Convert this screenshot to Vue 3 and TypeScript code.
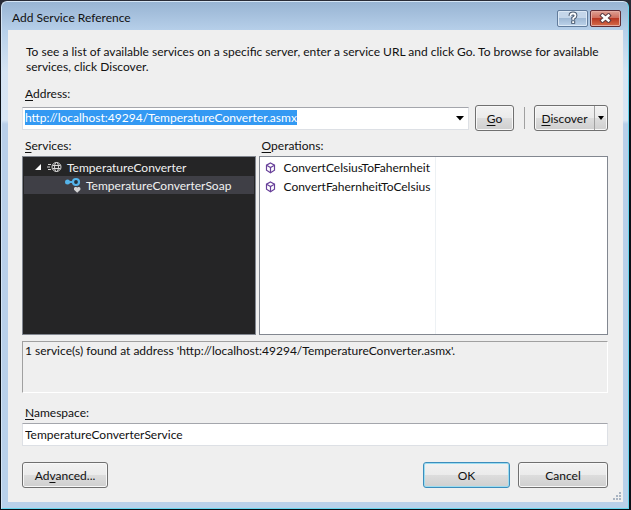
<script setup lang="ts">
import { onMounted, ref } from 'vue'

const address = ref('http://localhost:49294/TemperatureConverter.asmx')
const namespaceName = ref('TemperatureConverterService')
const expanded = ref(true)
const operations: string[] = ['ConvertCelsiusToFahernheit', 'ConvertFahernheitToCelsius']
const addressBox = ref<HTMLInputElement | null>(null)

onMounted(() => {
  addressBox.value?.focus()
  addressBox.value?.select()
})
</script>

<template>
  <div class="desktop">
    <section class="window" role="dialog" aria-labelledby="dialog-title">
      <header class="titlebar">
        <h1 id="dialog-title">Add Service Reference</h1>
        <button class="caption help" type="button" aria-label="Help">
          <svg width="12" height="14" viewBox="0 0 12 14">
            <path d="M3.5 5V4.2Q3.5 2.500 6 2.500T8.500 4.700Q8.500 6 6.200 7.200V8.800" fill="none" stroke="#46566b" stroke-width="3.800" />
            <path d="M4.200 9.400h4v3.400h-4z" fill="#46566b" />
            <path d="M3.500 5V4.200Q3.500 2.500 6 2.500T8.500 4.700Q8.500 6 6.200 7.200V8.800" fill="none" stroke="#fff" stroke-width="1.800" />
            <path d="M5.200 10.200h2v1.800h-2z" fill="#fff" />
          </svg>
        </button>
        <button class="caption close" type="button" aria-label="Close">
          <svg width="13" height="10" viewBox="0 0 13 10">
            <path d="M3.500 2.500l6 5M9.500 2.500l-6 5" stroke="#5b3a42" stroke-width="4.400" stroke-linecap="square" />
            <path d="M3.500 2.500l6 5M9.500 2.500l-6 5" stroke="#fff" stroke-width="2.400" stroke-linecap="square" />
          </svg>
        </button>
      </header>

      <form class="client" @submit.prevent>
        <p class="intro">To see a list of available services on a specific server, enter a service URL and click Go. To browse for available services, click Discover.</p>

        <label class="caption-text" for="address"><u>A</u>ddress:</label>
        <div class="address-row">
          <div class="combo">
            <input id="address" ref="addressBox" v-model="address" type="text" spellcheck="false" autocomplete="off" />
            <button class="arrow" type="button" aria-label="Show recent addresses">
              <svg width="8" height="5" viewBox="0 0 8 5"><path d="M0 0h8L4 4.500z" /></svg>
            </button>
          </div>
          <button class="push go" type="button"><u>G</u>o</button>
          <span class="divider"></span>
          <div class="split">
            <button class="split-main" type="button"><u>D</u>iscover</button>
            <button class="split-arrow" type="button" aria-label="Discover options">
              <svg width="6" height="4" viewBox="0 0 6 4"><path d="M0 0h6L3 4z" /></svg>
            </button>
          </div>
        </div>

        <div class="panes">
          <div class="pane">
            <span id="services-label" class="caption-text"><u>S</u>ervices:</span>
            <ul class="tree" role="tree" aria-labelledby="services-label">
              <li class="node root" role="treeitem" :aria-expanded="expanded" @click="expanded = !expanded">
                <svg width="8" height="8" viewBox="0 0 8 8"><path d="M7 1v6H1z" fill="#fff" /></svg>
                <svg class="globe" width="15" height="12" viewBox="0 0 15 12" fill="none" stroke="#d6d6d6">
                  <path d="M1 3.500h3M0 6h3M1 8.500h3" />
                  <circle cx="9.500" cy="6" r="4.500" />
                  <ellipse cx="9.500" cy="6" rx="2" ry="4.500" />
                  <path d="M5.500 4.500h8M5.500 7.500h8" />
                </svg>
                <span>TemperatureConverter</span>
              </li>
              <li v-if="expanded" class="node child" role="treeitem" aria-selected="true">
                <svg width="17" height="16" viewBox="0 0 17 16">
                  <path d="M3 5h6" stroke="#55b4ea" stroke-width="2" />
                  <circle cx="2.500" cy="5" r="2.500" fill="#55b4ea" />
                  <circle cx="11" cy="5" r="3" fill="#25313a" stroke="#55b4ea" stroke-width="2.200" />
                  <path d="M10 10h1.500l.7.7.7-.7h1.500l1 1v1.800l-3.200 3-3.200-3V11z" fill="#d4d4d4" />
                </svg>
                <span>TemperatureConverterSoap</span>
              </li>
            </ul>
          </div>
          <div class="pane">
            <span id="operations-label" class="caption-text"><u>O</u>perations:</span>
            <ul class="list" aria-labelledby="operations-label">
              <li v-for="name in operations" :key="name">
                <svg width="11" height="12" viewBox="0 0 11 12" fill="none" stroke="#68409a" stroke-width="1.200">
                  <path d="M5.500 1l4 2.200v5L5.500 10.700l-4-2.500v-5z" />
                  <path d="M2 3.600l3.500 2 3.500-2M5.500 5.600v4.800" />
                </svg>
                <span>{{ name }}</span>
              </li>
            </ul>
          </div>
        </div>

        <output class="status">1 service(s) found at address '{{ address }}'.</output>

        <label class="caption-text" for="namespace"><u>N</u>amespace:</label>
        <input id="namespace" v-model="namespaceName" class="field" type="text" spellcheck="false" autocomplete="off" />

        <footer class="actions">
          <button class="push advanced" type="button">Ad<u>v</u>anced...</button>
          <button class="push ok" type="submit">OK</button>
          <button class="push cancel" type="button">Cancel</button>
        </footer>
        <svg class="grip" width="9" height="9" viewBox="0 0 9 9" fill="#a9b4c2">
          <path d="M6 0h2v2H6zM3 3h2v2H3zM6 3h2v2H6zM0 6h2v2H0zM3 6h2v2H3zM6 6h2v2H6z" />
        </svg>
      </form>
    </section>
  </div>
</template>

<style>
body {
  margin: 0;
  background: #101c26;
}
</style>

<style scoped>
* {
  box-sizing: border-box;
}

.desktop {
  min-height: 100vh;
  display: flex;
  padding: 1px 2px 2px 1px;
  background: linear-gradient(#292b36, #0a1017 20%, #0a1017);
  font: 12px/15px Lato, "Open Sans", sans-serif;
  color: #111;
}

.window {
  flex: 1;
  display: flex;
  flex-direction: column;
  padding: 0 5px 6px 6px;
  border: 1px solid #d5e5f5;
  border-right-color: #66d6ee;
  border-bottom-color: #66d6ee;
  border-radius: 6px 6px 0 0;
  background: linear-gradient(#98b4d3, #b6cfe9 28px, #d6e4f3 70px, #d9e6f4 118px, #b9cfe9 122px, #b9d1ea);
}

.titlebar {
  display: flex;
  align-items: center;
  height: 28px;
  padding: 4px 2px 0 4px;
}

h1 {
  flex: 1;
  margin: 0;
  font-size: 12px;
  line-height: 16px;
  font-weight: 400;
}

button,
input {
  font: inherit;
  color: inherit;
}

button {
  padding: 0;
}

.caption {
  display: flex;
  align-items: center;
  justify-content: center;
  width: 31px;
  height: 17px;
  margin-left: 2px;
  border: 1px solid #627c9c;
  border-radius: 2px;
  box-shadow: inset 0 0 0 1px #dce9f6;
}

.help {
  background: linear-gradient(#c4d6ea 50%, #9fb9d5 50%, #bdd3ea);
}

.close {
  border-color: #602c35;
  background: linear-gradient(#dda195, #cf6b5a 48%, #b83824 50%, #d66c4a);
  box-shadow: inset 0 0 0 1px #e5aaa0;
}

.client {
  position: relative;
  flex: 1;
  display: flex;
  flex-direction: column;
  padding: 14px 15px 14px 14px;
  background: #efefef;
}

.intro {
  margin: 0 4px 12px;
}

.caption-text {
  display: block;
  padding-left: 3px;
  line-height: 15px;
}

u {
  text-underline-offset: 2px;
}

.address-row {
  display: flex;
  align-items: center;
  height: 26px;
  margin: 4px 0 7px;
}

.combo {
  flex: 1;
  display: flex;
  height: 23px;
  border: 1px solid #dde0e5;
  border-top-color: #a4a6ac;
  background: #fff;
}

.combo input {
  flex: 1;
  min-width: 0;
  height: 17px;
  margin: 1px 0 0 2px;
  padding: 0;
  border: 0;
  outline: 0;
  background: transparent;
}

.combo input::selection {
  background: #3399f3;
  color: #fff;
}

.arrow {
  width: 17px;
  border: 0;
  background: transparent;
}

.arrow svg,
.split-arrow svg {
  display: block;
  margin: 0 auto;
}

.push,
.split {
  border: 1px solid #707070;
  border-radius: 3px;
  background: linear-gradient(#f2f2f2, #ebebeb 49%, #dddddd 50%, #cfcfcf);
  box-shadow: inset 0 0 0 1px #f8f8f8;
}

.push {
  height: 26px;
}

.go {
  width: 39px;
  margin-left: 6px;
}

.divider {
  width: 1px;
  height: 22px;
  margin: 0 9px 0 10px;
  background: #a0a0a0;
}

.split {
  display: flex;
  width: 74px;
  height: 26px;
}

.split button {
  border: 0;
  background: transparent;
}

.split-main {
  flex: 1;
}

.split .split-arrow {
  width: 13px;
  border-left: 1px solid #a0a0a0;
}

.panes {
  display: grid;
  grid-template-columns: 234fr 350fr;
  gap: 3px;
}

.tree,
.list {
  height: 179px;
  margin: 3px 0 0;
  padding: 1px;
  border: 1px solid #828790;
  list-style: none;
}

.tree {
  background: #252526;
  color: #f1f1f1;
}

.node {
  display: flex;
  align-items: center;
  height: 18px;
}

.root {
  gap: 5px;
  padding-left: 10px;
}

.child {
  gap: 4px;
  padding-left: 41px;
  background: #3f3f46;
}

.list {
  background: linear-gradient(#edf1f4, #edf1f4) 175px 0 / 1px 100% no-repeat #fff;
}

.list li {
  display: flex;
  align-items: center;
  gap: 8px;
  height: 19px;
  padding-left: 4px;
}

.status {
  display: block;
  height: 52px;
  margin: 6px 0 12px;
  padding: 1px 2px;
  border: 1px solid #a0a0a0;
  border-right-color: #fff;
  border-bottom-color: #fff;
}

.field {
  width: 100%;
  height: 23px;
  margin-top: 3px;
  padding: 0 2px;
  border: 1px solid #dde0e5;
  border-top-color: #a4a6ac;
  outline: 0;
  background: #fff;
}

.actions {
  display: flex;
  gap: 8px;
  margin-top: 16px;
}

.advanced {
  width: 86px;
  margin-right: auto;
}

.ok {
  width: 87px;
  border-color: #3c8dbc;
  box-shadow: inset 0 0 0 1px #9bdcf0;
}

.cancel {
  width: 90px;
}

.grip {
  position: absolute;
  right: 1px;
  bottom: 1px;
}
</style>
